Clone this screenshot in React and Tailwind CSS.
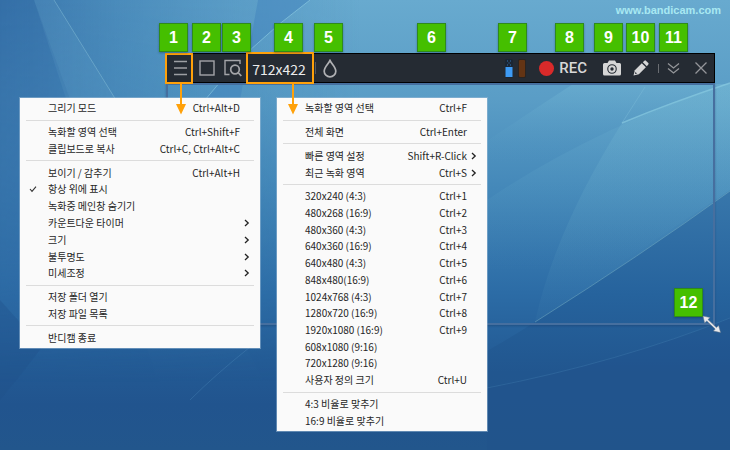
import React from 'react';
import clsx from 'clsx';

const mainMenu = [
  [{ label: '그리기 모드', keys: 'Ctrl+Alt+D' }],
  [
    { label: '녹화할 영역 선택', keys: 'Ctrl+Shift+F' },
    { label: '클립보드로 복사', keys: 'Ctrl+C, Ctrl+Alt+C' },
  ],
  [
    { label: '보이기 / 감추기', keys: 'Ctrl+Alt+H' },
    { label: '항상 위에 표시', checked: true },
    { label: '녹화중 메인창 숨기기' },
    { label: '카운트다운 타이머', submenu: true },
    { label: '크기', submenu: true },
    { label: '불투명도', submenu: true },
    { label: '미세조정', submenu: true },
  ],
  [{ label: '저장 폴더 열기' }, { label: '저장 파일 목록' }],
  [{ label: '반디캠 종료' }],
];

const sizeMenu = [
  [{ label: '녹화할 영역 선택', keys: 'Ctrl+F' }],
  [{ label: '전체 화면', keys: 'Ctrl+Enter' }],
  [
    { label: '빠른 영역 설정', keys: 'Shift+R-Click', submenu: true },
    { label: '최근 녹화 영역', keys: 'Ctrl+S', submenu: true },
  ],
  [
    { label: '320x240 (4:3)', keys: 'Ctrl+1' },
    { label: '480x268 (16:9)', keys: 'Ctrl+2' },
    { label: '480x360 (4:3)', keys: 'Ctrl+3' },
    { label: '640x360 (16:9)', keys: 'Ctrl+4' },
    { label: '640x480 (4:3)', keys: 'Ctrl+5' },
    { label: '848x480(16:9)', keys: 'Ctrl+6' },
    { label: '1024x768 (4:3)', keys: 'Ctrl+7' },
    { label: '1280x720 (16:9)', keys: 'Ctrl+8' },
    { label: '1920x1080 (16:9)', keys: 'Ctrl+9' },
    { label: '608x1080 (9:16)' },
    { label: '720x1280 (9:16)' },
    { label: '사용자 정의 크기', keys: 'Ctrl+U' },
  ],
  [{ label: '4:3 비율로 맞추기' }, { label: '16:9 비율로 맞추기' }],
];

// numbered markers, pinned to the side of the window their control belongs to
const badges = [
  { n: 1, place: 'left-[159px] top-[23px]' },
  { n: 2, place: 'left-[192px] top-[23px]' },
  { n: 3, place: 'left-[222px] top-[23px]' },
  { n: 4, place: 'left-[274px] top-[23px]' },
  { n: 5, place: 'left-[314px] top-[23px]' },
  { n: 6, place: 'left-[417px] top-[23px]' },
  { n: 7, place: 'right-[203px] top-[23px]' },
  { n: 8, place: 'right-[146px] top-[23px]' },
  { n: 9, place: 'right-[107px] top-[23px]' },
  { n: 10, place: 'right-[75px] top-[23px]' },
  { n: 11, place: 'right-[42px] top-[23px]' },
  { n: 12, place: 'right-[27px] top-[288px]' },
];

const Wallpaper = () => (
  <svg className="absolute inset-0 w-full h-full" viewBox="0 0 730 450" preserveAspectRatio="none" aria-hidden="true">
    <defs>
      <linearGradient id="base" x1="0" y1="0" x2="0" y2="1">
        <stop offset="0" stopColor="#68aacf" />
        <stop offset="0.22" stopColor="#5a9dc6" />
        <stop offset="0.42" stopColor="#4488b9" />
        <stop offset="0.65" stopColor="#2c6ca6" />
        <stop offset="0.8" stopColor="#235b95" />
        <stop offset="0.9" stopColor="#21548e" />
        <stop offset="1" stopColor="#22568c" />
      </linearGradient>
      <linearGradient id="left" x1="0" y1="0" x2="1" y2="0">
        <stop offset="0" stopColor="#2b65a0" stopOpacity="0.8" />
        <stop offset="0.4" stopColor="#2f70aa" stopOpacity="0.45" />
        <stop offset="1" stopColor="#3a7fb5" stopOpacity="0" />
      </linearGradient>
      <linearGradient id="fade" x1="0" y1="0" x2="0" y2="1">
        <stop offset="0" stopColor="#fff" />
        <stop offset="0.55" stopColor="#999" />
        <stop offset="0.85" stopColor="#000" />
      </linearGradient>
      <mask id="top">
        <rect width="730" height="450" fill="url(#fade)" />
      </mask>
      <linearGradient id="deep" gradientUnits="userSpaceOnUse" x1="0" y1="190" x2="0" y2="450">
        <stop offset="0" stopColor="#3877ab" />
        <stop offset="0.4" stopColor="#26639d" />
        <stop offset="0.7" stopColor="#21568f" />
        <stop offset="1" stopColor="#22568c" />
      </linearGradient>
      <linearGradient id="sheen" x1="0" y1="0" x2="0" y2="1">
        <stop offset="0" stopColor="#7cc0da" stopOpacity="0.32" />
        <stop offset="0.7" stopColor="#4f96bf" stopOpacity="0" />
      </linearGradient>
      <linearGradient id="panel" gradientUnits="userSpaceOnUse" x1="0" y1="83" x2="0" y2="322">
        <stop offset="0" stopColor="#7cc0d8" stopOpacity="0.3" />
        <stop offset="1" stopColor="#5c9fc0" stopOpacity="0.06" />
      </linearGradient>
    </defs>
    <rect width="730" height="450" fill="url(#base)" />
    <g mask="url(#top)">
      <rect width="360" height="450" fill="url(#left)" />
      <path d="M0 0H34L74 110L180 450H0Z" fill="#2d68a3" opacity="0.35" />
      <path d="M54 0L116 100L300 450H180L34 0Z" fill="#7ab7d5" opacity="0.12" />
    </g>
    <path d="M54 0L116 100" stroke="#8cc3da" strokeOpacity="0.45" fill="none" />
    <path d="M258 0H310Q245 48 205 100H240Z" fill="#4385be" opacity="0.55" />
    <path d="M310 0Q245 48 205 100" stroke="#8dcbe3" strokeOpacity="0.6" fill="none" />
    <path d="M487 141Q530 112 573 84H730Q590 130 487 200Z" fill="url(#sheen)" />
    <path d="M487 200Q590 130 730 83V190L487 352Z" fill="url(#sheen)" />
    <path d="M622 123Q670 103 730 83" stroke="#91d2e6" strokeOpacity="0.6" strokeWidth="1.5" fill="none" />
    <path d="M622 123Q555 230 535 322Q640 256 730 190V83Q670 103 622 123Z" fill="url(#panel)" />
    <path d="M645 87L622 123" stroke="#7fbdda" strokeOpacity="0.4" fill="none" />
    <path d="M730 191Q640 256 535 322Q510 338 487 351V450H730Z" fill="url(#deep)" />
    <path d="M730 191Q640 256 535 322" stroke="#75adc1" strokeOpacity="0.5" fill="none" />
    <path d="M730 318Q620 362 487 388V450H730Z" fill="#20508a" opacity="0.3" />
    <path d="M730 318Q620 362 487 388" stroke="#4580b2" strokeOpacity="0.35" fill="none" />
    <path d="M250 347Q215 375 190 400" stroke="#4c8abb" strokeOpacity="0.35" fill="none" />
    <path d="M0 400Q25 370 42 347L0 300Z" fill="#204f8a" opacity="0.35" />
  </svg>
);

const Menu = ({ label, groups, className }) => (
  <ul
    role="menu"
    aria-label={label}
    className={clsx(
      'absolute top-[98px] flex flex-col py-0.5 bg-[#fafafa] text-[#262626] text-[10px] shadow-[0_0_0_1px_rgba(160,190,215,0.5)]',
      className
    )}
  >
    {groups.map((group, g) => (
      <React.Fragment key={g}>
        {g > 0 && (
          <li role="separator" className="shrink-0 h-[7px] px-1.5 flex items-center">
            <span className="w-full h-px bg-[#dcdcdc]" />
          </li>
        )}
        {group.map((item) => (
          <li key={item.label} role="none" className="h-[17px] min-h-0 flex">
            <button role="menuitem" className="w-full flex items-center whitespace-nowrap leading-4">
              <span className="w-7 shrink-0 pl-[9px]">
                {item.checked && (
                  <svg width="8" height="8" viewBox="0 0 8 8" fill="none" stroke="#333" strokeWidth="1.1">
                    <path d="M1 4L3 6.3L7 1.6" />
                  </svg>
                )}
              </span>
              <span>{item.label}</span>
              <span className="ml-auto">{item.keys}</span>
              <span className="w-5 shrink-0 pl-1">
                {item.submenu && (
                  <svg width="6" height="8" viewBox="0 0 6 8" fill="none" stroke="#222" strokeWidth="1.3">
                    <path d="M1 1L4.2 4L1 7" />
                  </svg>
                )}
              </span>
            </button>
          </li>
        ))}
      </React.Fragment>
    ))}
  </ul>
);

const Arrow = ({ className }) => (
  <svg className={clsx('absolute top-[83px]', className)} width="12" height="32" viewBox="0 0 12 32" aria-hidden="true">
    <path d="M5 0H7V21H11L6 31.5L1 21H5Z" fill="#ffa10a" />
  </svg>
);

const ToolButton = ({ label, className, children }) => (
  <button aria-label={label} className={clsx('shrink-0 h-7 flex items-center justify-center', className)}>
    {children}
  </button>
);

const Toolbar = () => (
  <div className="h-[30px] flex items-center bg-[#252b33] text-[#dedede] shadow-[inset_0_0_0_1px_#000]">
    <ToolButton label="메뉴" className="w-7 h-[31px] -ml-px pl-[3px] border-2 border-[#ffa10a]">
      <svg width="14" height="16" viewBox="0 0 14 16" stroke="#9d9fa3" strokeWidth="1.5">
        <path d="M0 1.5H13M0 8H13M0 14.5H13" />
      </svg>
    </ToolButton>
    <ToolButton label="전체 화면" className="w-[27px]">
      <svg width="16" height="16" viewBox="0 0 16 16" fill="none" stroke="#a3a4a8" strokeWidth="1.4">
        <rect x="1" y="1" width="14" height="14" />
      </svg>
    </ToolButton>
    <ToolButton label="영역 찾기" className="w-[26px]">
      <svg width="18" height="18" viewBox="0 0 18 18" fill="none" stroke="#a3a4a8" strokeWidth="1.4">
        <path d="M16 5V1.5H1V15.5H5.5" />
        <circle cx="11" cy="10.5" r="4.3" strokeWidth="1.7" />
        <path d="M14 13.5L17.3 17" strokeWidth="1.8" />
      </svg>
    </ToolButton>
    <button className="shrink-0 w-[68px] h-8 pt-0.5 pr-0.5 border-2 border-[#ffa10a] text-sm text-[#ececec] flex items-center justify-center">
      712x422
    </button>
    <span className="shrink-0 w-px h-3 ml-px bg-[#55595f]" />
    <ToolButton label="투명도" className="w-7">
      <svg width="14" height="19" viewBox="0 0 14 19" fill="none" stroke="#b0b1b4" strokeWidth="1.7">
        <path d="M7 1.5C5 5.5 1.2 8.3 1.2 12.2A5.8 5.6 0 0 0 12.8 12.2C12.8 8.3 9 5.5 7 1.5Z" />
      </svg>
    </ToolButton>

    <div className="ml-auto shrink-0 w-[34px] flex gap-[5px]" aria-label="사운드">
      <svg width="8" height="19" viewBox="0 0 8 19">
        <rect width="8" height="19" rx="2" fill="#1b2634" />
        <rect x="0.5" y="8" width="7" height="10" fill="#3e9bf5" />
        <path d="M2 2H3M5 2H6M3.5 4H4.5M2 6H3M5 6H6" stroke="#3470ae" />
      </svg>
      <svg width="8" height="19" viewBox="0 0 8 19">
        <rect width="8" height="19" rx="2" fill="#2b2420" />
        <rect x="1" y="1" width="6" height="17" rx="1" fill="#633414" />
      </svg>
    </div>
    <button className="shrink-0 flex items-center gap-[5px] text-[15px] leading-5 text-[#d8d8d8] mr-2.5">
      <span className="w-[15px] h-[15px] rounded-full bg-[#d92a2a]" />
      <span className="font-[Roboto,sans-serif] font-medium">REC</span>
    </button>
    <ToolButton label="캡처" className="w-[30px]">
      <svg width="18" height="16" viewBox="0 0 18 16">
        <path
          fillRule="evenodd"
          fill="#d6d6d6"
          d="M6 0.5H12L13.5 3H16.5Q18 3 18 4.5V14Q18 15.5 16.5 15.5H1.5Q0 15.5 0 14V4.5Q0 3 1.5 3H4.5ZM9 4.2A4.8 4.8 0 1 0 9 13.8A4.8 4.8 0 1 0 9 4.2Z"
        />
        <circle cx="9" cy="9" r="2.7" fill="none" stroke="#d6d6d6" strokeWidth="2" />
      </svg>
    </ToolButton>
    <ToolButton label="그리기" className="w-7">
      <svg width="16" height="16" viewBox="0 0 16 16" fill="#d6d6d6">
        <path d="M0.5 15.5L1.8 10.2L8.8 3.2L12.9 7.3L5.9 14.3Z" />
        <path d="M9.8 2.3L11.4 0.7Q12.2 0 12.9 0.7L15.3 3.1Q16 3.9 15.3 4.6L13.8 6.2Z" />
        <path d="M2.4 11.9L4.1 13.6L2 14.1Z" fill="#252b33" />
      </svg>
    </ToolButton>
    <span className="shrink-0 w-px h-[9px] ml-[3px] mr-px bg-[#6a6d72]" />
    <ToolButton label="접기" className="w-[27px]">
      <svg width="13" height="13" viewBox="0 0 13 13" fill="none" stroke="#94969a" strokeWidth="1.3">
        <path d="M1 1.5L6.5 6L12 1.5M1 6.5L6.5 11L12 6.5" />
      </svg>
    </ToolButton>
    <ToolButton label="닫기" className="w-7">
      <svg width="12" height="12" viewBox="0 0 12 12" fill="none" stroke="#94969a" strokeWidth="1.3">
        <path d="M0.5 0.5L11.5 11.5M11.5 0.5L0.5 11.5" />
      </svg>
    </ToolButton>
  </div>
);

const App = () => {
  return (
    <main className="relative min-h-screen overflow-hidden bg-[#22568c] font-[Noto_Sans_CJK_KR,sans-serif]">
      <Wallpaper />

      <div className="relative">
        <header className="h-[53px] pt-0.5 pr-[9px] flex justify-end items-start">
          <a href="#home" className="font-[Liberation_Sans,sans-serif] font-bold text-[11px] leading-4 text-[#a8e8f2]">
            www.bandicam.com
          </a>
        </header>
        <section className="ml-[166px] mr-[15px]">
          <Toolbar />
          {/* recording area */}
          <div className="aspect-[549/242] border-2 border-[#466f9f] shadow-[0_1px_2px_rgba(20,50,90,0.35)]" />
        </section>
      </div>

      <Menu label="메뉴" groups={mainMenu} className="left-5 w-[240px] max-h-[250px]" />
      <Menu label="녹화 크기" groups={sizeMenu} className="left-[277px] w-[210px] max-h-[333px]" />
      <Arrow className="left-[175px]" />
      <Arrow className="left-[287px]" />

      {badges.map(({ n, place }) => (
        <span
          key={n}
          className={clsx(
            'absolute w-[29px] h-[29px] flex items-center justify-center border border-[#2f8a1c] bg-[#45bf00] text-white text-base leading-5 font-bold font-[Liberation_Sans,sans-serif] shadow-[0_1px_2px_rgba(0,30,60,0.35)]',
            place
          )}
        >
          {n}
        </span>
      ))}

      {/* resize cursor */}
      <svg className="absolute right-[8px] top-[315px]" width="20" height="19" viewBox="0 0 20 19" aria-hidden="true">
        <path
          d="M1 1L8 2.6L6 4.6L14.4 12.6L16.6 10.6L18.6 17.6L11.4 16L13.2 14L4.8 6L2.6 8Z"
          fill="#e9e9ec"
          stroke="#5f7288"
          strokeWidth="0.5"
        />
      </svg>
    </main>
  );
};

export default App;
